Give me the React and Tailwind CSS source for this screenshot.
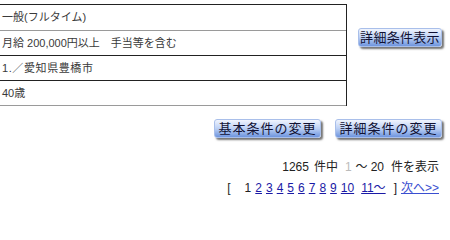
import React from "react";

const font = { fontFamily: '"Liberation Sans", "Noto Sans CJK JP", sans-serif' };

function Btn({ children, className = "" }) {
  return (
    <button
      className={
        "h-[19px] flex items-center justify-center whitespace-nowrap rounded-[3px] border border-[#a9bfea] bg-linear-to-b from-[#f0f4fd] via-[#bcd0f4] to-[#6f95de] shadow-[2px_2px_2px_rgba(0,0,0,0.55)] text-[13px] leading-none text-[#111133] " +
        className
      }
      style={font}
    >
      {children}
    </button>
  );
}

export default function App() {
  const rows = [
    { t: "一般(フルタイム)", b: "border-[#9a9a9a]", h: "h-[26px]" },
    { t: "月給 200,000円以上　手当等を含む", b: "border-[#222]", h: "h-[25px]" },
    { t: "1.／愛知県豊橋市", b: "border-[#222]", h: "h-[25px]", track: "tracking-[0.6px]" },
    { t: "40歳", b: "border-[#9a9a9a]", h: "h-[25px]" },
  ];
  const pages = ["2", "3", "4", "5", "6", "7", "8", "9", "10"];
  return (
    <div className="w-[450px] h-[205px] bg-white overflow-hidden" style={font}>
      <div className="flex items-start">
        <div className="mt-[4px] w-[347px] border-t border-r border-[#222]">
          {rows.map((r, i) => (
            <div
              key={i}
              className={`${r.h} border-b ${r.b} flex items-center pl-[2px] text-[11px] text-[#3a3a3a] ${r.track || ""}`}
            >
              {r.t}
            </div>
          ))}
        </div>
        <Btn className="ml-[11px] mt-[28px] w-[84px] px-0 tracking-[0.3px]">詳細条件表示</Btn>
      </div>
      <div className="flex justify-end gap-[14px] pr-[8px] mt-[13px]">
        <Btn className="w-[107px] tracking-[1px]">基本条件の変更</Btn>
        <Btn className="w-[107px] tracking-[1px]">詳細条件の変更</Btn>
      </div>
      <div className="mt-[21px] h-[16px] flex justify-end items-center pr-[11px] text-[12px] text-[#222] whitespace-nowrap">
        <span>1265</span>
        <span className="ml-[5px]">件中</span>
        <span className="ml-[7px] text-[#bbbbbb]">1</span>
        <span className="ml-[4px]">～</span>
        <span className="ml-[3px]">20</span>
        <span className="ml-[7px]">件を表示</span>
      </div>
      <div className="mt-[5px] h-[16px] flex justify-end items-center pr-[11px] text-[12px] text-[#222]">
        <span className="mr-[14px]">[</span>
        <span className="mr-[4px]">1</span>
        {pages.map((p) => (
          <a key={p} className="mr-[4px] text-[#1a1aa6] underline" href="#">
            {p}
          </a>
        ))}
        <a className="ml-[3px] mr-[8px] text-[#1a1aa6] underline" href="#">11～</a>
        <span className="mr-[4px]">]</span>
        <a className="text-[#3a4ed0] underline" href="#">次へ&gt;&gt;</a>
      </div>
    </div>
  );
}
